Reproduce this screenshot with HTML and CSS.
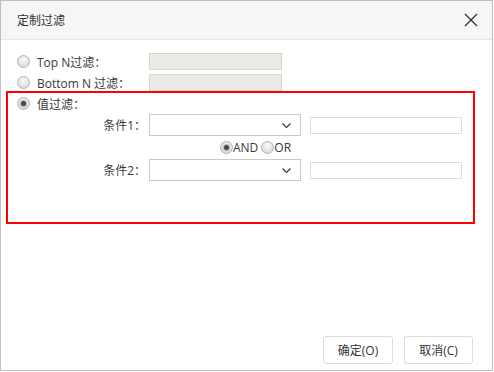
FILE: index.html
```html
<!DOCTYPE html>
<html>
<head>
<meta charset="utf-8">
<link rel="stylesheet" href="styles.css">
</head>
<body>
<div class="page">
  <div class="dialog">
    <div class="header">
      <span class="title">定制过滤</span>
      <svg class="close" width="14" height="14" viewBox="0 0 14 14">
        <path d="M1 1 L13 13 M13 1 L1 13" stroke="#333" stroke-width="1.4" fill="none"/>
      </svg>
    </div>
    <div class="body">
      <div class="row row-top">
        <span class="radio"></span>
        <span class="opt-label">Top N过滤：</span>
        <span class="gray-box"></span>
      </div>
      <div class="row row-top">
        <span class="radio"></span>
        <span class="opt-label">Bottom N 过滤：</span>
        <span class="gray-box"></span>
      </div>
      <div class="row row-val">
        <span class="radio checked"></span>
        <span class="opt-label">值过滤：</span>
      </div>
      <div class="row row-cond">
        <span class="cond-label">条件1：</span>
        <span class="select">
          <svg class="chev" width="9" height="5" viewBox="0 0 9 5"><path d="M0.5 0.5 L4.5 4.5 L8.5 0.5" stroke="#333" stroke-width="1.1" fill="none"/></svg>
        </span>
        <span class="text-box"></span>
      </div>
      <div class="row row-logic">
        <span class="radio checked"></span><span class="logic-label">AND</span>
        <span class="radio"></span><span class="logic-label">OR</span>
      </div>
      <div class="row row-cond">
        <span class="cond-label">条件2：</span>
        <span class="select">
          <svg class="chev" width="9" height="5" viewBox="0 0 9 5"><path d="M0.5 0.5 L4.5 4.5 L8.5 0.5" stroke="#333" stroke-width="1.1" fill="none"/></svg>
        </span>
        <span class="text-box"></span>
      </div>
    </div>
    <div class="footer">
      <button class="btn btn-ok">确定(O)</button>
      <button class="btn btn-cancel">取消(C)</button>
    </div>
  </div>
  <div class="highlight"></div>
</div>
</body>
</html>
```
FILE: styles.css
```css
* { box-sizing: border-box; }
html, body { margin: 0; padding: 0; background: #fff; }
body {
  font-family: "Open Sans", "Noto Sans CJK SC", sans-serif;
  font-size: 12px;
  color: #3a3a3a;
}
.page {
  position: relative;
  width: 494px;
  height: 372px;
}
.dialog {
  width: 493px;
  height: 371px;
  border: 1px solid #bfbfbf;
  display: flex;
  flex-direction: column;
  background: #fff;
}
.header {
  height: 39px;
  flex: none;
  background: #f6f6f6;
  border-bottom: 1px solid #e6e6e6;
  display: flex;
  align-items: center;
  justify-content: space-between;
  padding: 0 14px 0 16px;
}
.title { font-size: 12px; color: #333; }
.close { display: block; }
.body {
  flex: 1;
  padding: 11px 0 0 16px;
  display: flex;
  flex-direction: column;
}
.row { display: flex; align-items: center; }
.row-top { height: 21px; }
.row-val { height: 21px; }
.row-cond { height: 22px; }
.row-logic { height: 23px; padding-left: 203px; }
.radio {
  width: 13px;
  height: 13px;
  border-radius: 50%;
  border: 1px solid #b4b4b4;
  background: radial-gradient(circle at 50% 35%, #fafafa 0%, #e2e2e2 60%, #cdcdcd 100%);
  flex: none;
  position: relative;
}
.radio.checked::after {
  content: "";
  position: absolute;
  left: 3px;
  top: 3px;
  width: 5px;
  height: 5px;
  border-radius: 50%;
  background: #4a4a4a;
  box-shadow: 0 0 1px 1px rgba(80,80,80,0.35);
}
.opt-label {
  margin-left: 7px;
  width: 112px;
  white-space: nowrap;
}
.gray-box {
  width: 133px;
  height: 17px;
  background: #ebeae4;
  border: 1px solid #d6d5cf;
}
.cond-label {
  width: 132px;
  text-align: right;
  padding-right: 3px;
  white-space: nowrap;
}
.select {
  width: 152px;
  height: 22px;
  border: 1px solid #c9c9c9;
  background: #fff;
  display: flex;
  align-items: center;
  justify-content: flex-end;
  padding-right: 9px;
}
.chev { display: block; }
.text-box {
  margin-left: 9px;
  width: 152px;
  height: 17px;
  border: 1px solid #dcdcdc;
  background: #fff;
}
.logic-label { margin-right: 3px; }
.footer {
  flex: none;
  display: flex;
  justify-content: flex-end;
  gap: 11px;
  padding: 0 19px 6px 0;
}
.btn {
  height: 28px;
  border: 1px solid #dcdcdc;
  border-radius: 3px;
  background: #fff;
  font-family: "Open Sans", "Noto Sans CJK SC", sans-serif;
  font-size: 12px;
  color: #333;
  padding: 0;
}
.btn-ok { width: 70px; }
.btn-cancel { width: 69px; }
.highlight {
  position: absolute;
  left: 6px;
  top: 91px;
  width: 469px;
  height: 133px;
  border: 2px solid #ff0000;
  pointer-events: none;
}
```
